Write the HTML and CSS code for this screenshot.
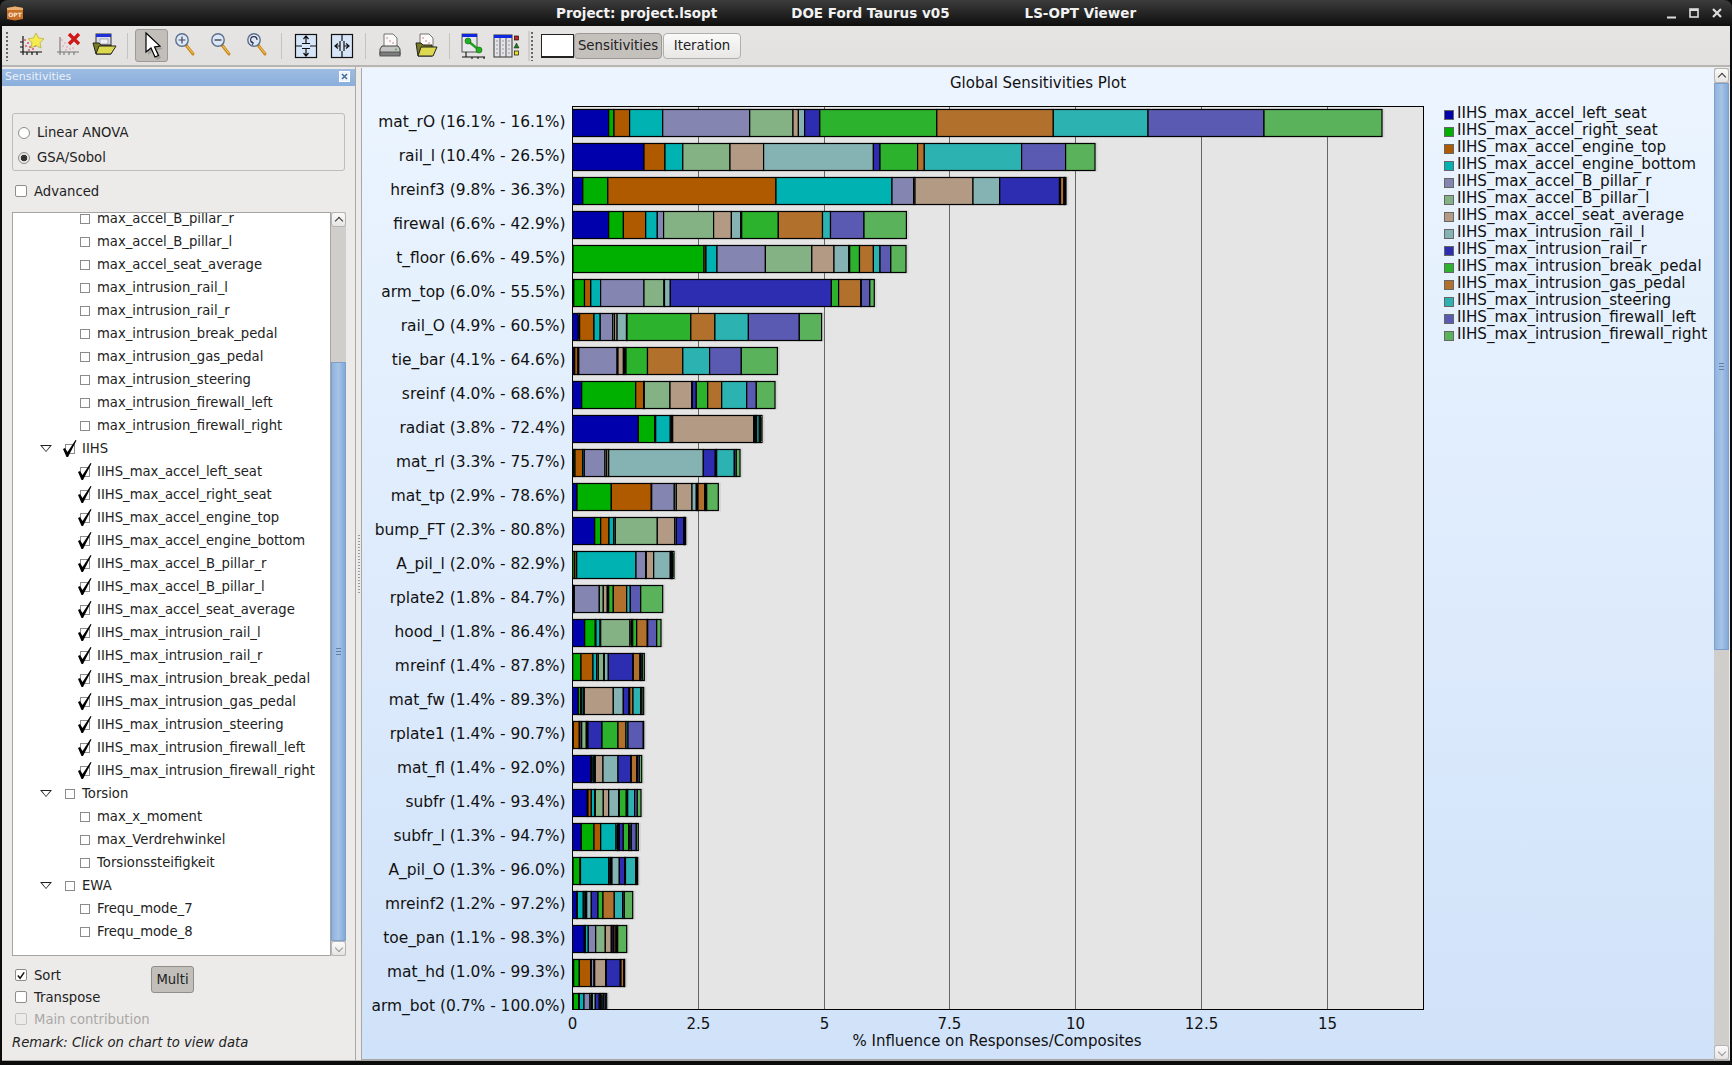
FILE: index.html
```html
<!DOCTYPE html>
<html lang="en">
  <head>
    <meta charset="UTF-8" />
    <title>LS-OPT Viewer</title>
    <link rel="stylesheet" href="styles.css">
  </head>
  <body>
    <svg class="defs" width="0" height="0">
      <symbol id="tick" viewBox="0 0 14 18">
        <path d="M0 9 L2 8 L4.5 12 L12.5 0 L13.5 0.5 L5 17 L3.5 17 Z" fill="#000" />
      </symbol>
      <g id="axes">
        <path d="M8 5 V24 M5 21 H27 M12 21 V24 M17 21 V24 M22 21 V24 M5 16 H8 M5 11 H8" stroke="#111" stroke-width="1.2" fill="none" />
      </g>
      <g id="lens">
        <path d="M15 14 L22 23" stroke="#c98a1e" stroke-width="3" stroke-linecap="round" />
        <path d="M16 15 L22 22.5" stroke="#f5cf6a" stroke-width="1" />
        <circle cx="11" cy="9" r="6.2" fill="#dce8f8" stroke="#5c6f8c" stroke-width="1.4" />
      </g>
    </svg>

    <header class="titlebar">
      <svg class="app-icon" width="16" height="15" viewBox="0 0 16 15">
        <path d="M0 2 L8 0.5 L16 2 V13 L8 14.5 L0 13 Z" fill="#c8702a" />
        <path d="M0 2 L8 0.5 L16 2 V4 H0 Z" fill="#e8b070" />
        <text class="app-icon-text" x="8" y="11" text-anchor="middle">OPT</text>
      </svg>
      <span class="title-part project">Project: project.lsopt</span>
      <span class="title-part doe">DOE Ford Taurus v05</span>
      <span class="title-part viewer">LS-OPT Viewer</span>
      <div class="win-buttons">
        <svg width="12" height="12" viewBox="0 0 12 12"><path d="M2 10.5 H11" stroke="#ddd" stroke-width="2" /></svg>
        <svg width="12" height="12" viewBox="0 0 12 12"><rect x="2" y="2" width="8" height="8" fill="none" stroke="#ddd" stroke-width="1.6" /><path d="M2 3 H10" stroke="#ddd" stroke-width="2" /></svg>
        <svg width="12" height="12" viewBox="0 0 12 12"><path d="M2 2 L10 10 M10 2 L2 10" stroke="#ddd" stroke-width="2.2" /></svg>
      </div>
    </header>

    <nav class="toolbar">
      <div class="handle first"></div>
      <button class="tool">
        <svg width="30" height="30" viewBox="0 0 30 30">
          <use href="#axes" />
          <g fill="#e0506a"><circle cx="10" cy="9" r="1" /><circle cx="13" cy="12" r="1" /><circle cx="11" cy="15" r="1" /><circle cx="15" cy="16" r="1" /><circle cx="18" cy="18" r="1" /><circle cx="14" cy="19" r="1" /><circle cx="20" cy="15" r="1" /></g>
          <path d="M21 2 L23.6 7 L29 7.8 L25 11.6 L26 17 L21 14.4 L16 17 L17 11.6 L13 7.8 L18.4 7 Z" fill="#f4ec50" stroke="#b8b040" stroke-width="0.8" />
        </svg>
      </button>
      <button class="tool">
        <svg width="30" height="30" viewBox="0 0 30 30">
          <path d="M8 6 V24 M5 21 H27 M12 21 V24 M17 21 V24 M22 21 V24" stroke="#777" stroke-width="1.1" fill="none" />
          <g fill="#eab0b8"><circle cx="10" cy="9" r="1" /><circle cx="13" cy="12" r="1" /><circle cx="11" cy="15" r="1" /><circle cx="15" cy="16" r="1" /><circle cx="18" cy="18" r="1" /><circle cx="14" cy="19" r="1" /><circle cx="21" cy="17" r="1" /></g>
          <path d="M17 3 L27 13 M27 3 L17 13" stroke="#d01818" stroke-width="3.4" />
        </svg>
      </button>
      <button class="tool">
        <svg width="30" height="30" viewBox="0 0 30 30">
          <rect x="7" y="3" width="15" height="13" fill="#d8dce8" stroke="#333" stroke-width="1" />
          <rect x="7" y="3" width="15" height="3" fill="#2030d8" />
          <rect x="11" y="8" width="8" height="5" fill="#f0f0f8" stroke="#888" stroke-width="0.6" />
          <path d="M4 12 H10 L12 14 H22 V23 H7 Z" fill="#7a7a20" stroke="#222" stroke-width="1" />
          <path d="M7 23 L10 15 H27 L22 23 Z" fill="#dcd850" stroke="#222" stroke-width="1" />
        </svg>
      </button>
      <div class="sep"></div>
      <button class="tool pointer">
        <svg width="30" height="32" viewBox="0 0 30 32">
          <path d="M11 6 L11 25 L16 21 L20 30 L24 28 L20 20 L26 19 Z" fill="#555" opacity="0.3" />
          <path d="M9 3 L9 22 L14 18 L18 27 L21.5 25.5 L17.5 17 L23 16 Z" fill="#fff" stroke="#000" stroke-width="1.2" />
        </svg>
      </button>
      <button class="tool">
        <svg width="30" height="30" viewBox="0 0 30 30"><use href="#lens" /><path d="M7.5 9 H14.5 M11 5.5 V12.5" stroke="#445" stroke-width="1.2" /></svg>
      </button>
      <button class="tool">
        <svg width="30" height="30" viewBox="0 0 30 30"><use href="#lens" /><path d="M7.5 9 H14.5" stroke="#445" stroke-width="1.4" /></svg>
      </button>
      <button class="tool">
        <svg width="30" height="30" viewBox="0 0 30 30"><use href="#lens" /><path d="M14 9 A3.2 3.2 0 1 0 10.5 12 M10.5 12 L8.5 10.5 M10.5 12 L9 14" stroke="#334" stroke-width="1.1" fill="none" /></svg>
      </button>
      <div class="sep"></div>
      <button class="tool">
        <svg width="30" height="30" viewBox="0 0 30 30">
          <rect x="4.5" y="3.5" width="21" height="23" fill="#d6e6f8" stroke="#111" stroke-width="1.2" />
          <path d="M4.5 15 H11 M19 15 H25.5 M15 5 V12 M12.5 8 L15 5 L17.5 8 M15 18 V25 M12.5 22 L15 25 L17.5 22 M11 12.5 H19 M11 17.5 H19" stroke="#111" stroke-width="1.2" fill="none" />
        </svg>
      </button>
      <button class="tool">
        <svg width="30" height="30" viewBox="0 0 30 30">
          <rect x="4.5" y="3.5" width="21" height="23" fill="#d6e6f8" stroke="#111" stroke-width="1.2" />
          <path d="M15 3.5 V10 M15 20 V26.5 M8 15 H13 M11 12.5 L8 15 L11 17.5 M17 15 H22 M19 12.5 L22 15 L19 17.5 M13 10 V20 M17 10 V20" stroke="#111" stroke-width="1.2" fill="none" />
        </svg>
      </button>
      <div class="sep"></div>
      <button class="tool">
        <svg width="30" height="30" viewBox="0 0 30 30">
          <path d="M9 3 H18 L22 7 V16 H9 Z" fill="#fafafa" stroke="#666" stroke-width="0.9" />
          <g fill="#d87080"><circle cx="12" cy="7" r="0.8" /><circle cx="15" cy="10" r="0.8" /><circle cx="18" cy="12" r="0.8" /></g>
          <path d="M7 15 H23 L25 18 V24 H5 V18 Z" fill="#c4c4c4" stroke="#444" stroke-width="1" />
          <rect x="5" y="21" width="20" height="4" fill="#7d7d7d" stroke="#444" stroke-width="0.8" />
          <circle cx="21" cy="18.5" r="1" fill="#50b050" />
        </svg>
      </button>
      <button class="tool">
        <svg width="30" height="30" viewBox="0 0 30 30">
          <path d="M9 3 H18 L22 7 V17 H9 Z" fill="#fafafa" stroke="#666" stroke-width="0.9" />
          <g fill="#d87080"><circle cx="12" cy="7" r="0.8" /><circle cx="15" cy="10" r="0.8" /><circle cx="18" cy="12" r="0.8" /></g>
          <path d="M5 12 H10 L12 14 H21 V25 H7 Z" fill="#7a7a20" stroke="#222" stroke-width="1" />
          <path d="M7 25 L10 16 H26 L22 25 Z" fill="#dcd850" stroke="#222" stroke-width="1" />
        </svg>
      </button>
      <div class="sep"></div>
      <button class="tool narrow">
        <svg width="30" height="30" viewBox="0 0 30 30">
          <rect x="4" y="3" width="15" height="18" fill="#e8e8ec" stroke="#444" stroke-width="0.9" />
          <rect x="4" y="3" width="15" height="3" fill="#1028e0" />
          <path d="M10 10 L21 19" stroke="#20a020" stroke-width="2.4" />
          <circle cx="10" cy="10" r="3" fill="#20b020" stroke="#156015" stroke-width="0.6" />
          <circle cx="21" cy="19" r="3" fill="#20b020" stroke="#156015" stroke-width="0.6" />
          <path d="M8 21 V26 M4 26 H27 M14 26 V28 M20 26 V28 M26 26 V28" stroke="#111" stroke-width="1.1" fill="none" />
        </svg>
      </button>
      <button class="tool narrow">
        <svg width="30" height="30" viewBox="0 0 30 30">
          <rect x="3" y="4" width="18" height="22" fill="#e4e4e8" stroke="#333" stroke-width="1" />
          <rect x="3" y="4" width="18" height="3" fill="#1028e0" />
          <path d="M9 7 V26 M15 7 V26" stroke="#555" stroke-width="1" />
          <path d="M5 10 H7 M5 14 H7 M5 18 H7 M5 22 H7 M11 10 H13 M11 14 H13 M11 18 H13 M11 22 H13 M17 10 H19 M17 14 H19 M17 18 H19 M17 22 H19" stroke="#999" stroke-width="1" />
          <rect x="23.5" y="5" width="4" height="4" fill="#d02020" stroke="#111" stroke-width="0.7" />
          <path d="M25.5 12 L28 17 H23 Z" fill="#208020" stroke="#111" stroke-width="0.5" />
          <rect x="23.5" y="20" width="4" height="4" fill="#f0e020" stroke="#111" stroke-width="0.7" />
        </svg>
      </button>
      <div class="handle second"></div>
      <div class="color-box"></div>
      <button class="text-btn sens">Sensitivities</button>
      <button class="text-btn iter">Iteration</button>
    </nav>

    <main class="workspace">
      <aside class="side">
        <div class="side-title">
          <span>Sensitivities</span>
          <svg width="11" height="11" viewBox="0 0 11 11">
            <rect x="0.5" y="0.5" width="10" height="10" fill="#eef4fb" stroke="#fff" />
            <path d="M3 3 L8 8 M8 3 L3 8" stroke="#4a6f9c" stroke-width="1.6" />
          </svg>
        </div>

        <div class="method-box">
          <label class="radio-row"><span class="radio"></span>Linear ANOVA</label>
          <label class="radio-row"><span class="radio on"></span>GSA/Sobol</label>
        </div>

        <label class="opt advanced"><span class="opt-box"></span>Advanced</label>

        <div class="tree-wrap">
          <ul class="tree">
            <li class="leaf"><span class="box"></span>max_accel_B_pillar_r</li>
            <li class="leaf"><span class="box"></span>max_accel_B_pillar_l</li>
            <li class="leaf"><span class="box"></span>max_accel_seat_average</li>
            <li class="leaf"><span class="box"></span>max_intrusion_rail_l</li>
            <li class="leaf"><span class="box"></span>max_intrusion_rail_r</li>
            <li class="leaf"><span class="box"></span>max_intrusion_break_pedal</li>
            <li class="leaf"><span class="box"></span>max_intrusion_gas_pedal</li>
            <li class="leaf"><span class="box"></span>max_intrusion_steering</li>
            <li class="leaf"><span class="box"></span>max_intrusion_firewall_left</li>
            <li class="leaf"><span class="box"></span>max_intrusion_firewall_right</li>
            <li class="group"><span class="arrow"></span><span class="box on"><svg class="tick"><use href="#tick" /></svg></span>IIHS</li>
            <li class="leaf"><span class="box on"><svg class="tick"><use href="#tick" /></svg></span>IIHS_max_accel_left_seat</li>
            <li class="leaf"><span class="box on"><svg class="tick"><use href="#tick" /></svg></span>IIHS_max_accel_right_seat</li>
            <li class="leaf"><span class="box on"><svg class="tick"><use href="#tick" /></svg></span>IIHS_max_accel_engine_top</li>
            <li class="leaf"><span class="box on"><svg class="tick"><use href="#tick" /></svg></span>IIHS_max_accel_engine_bottom</li>
            <li class="leaf"><span class="box on"><svg class="tick"><use href="#tick" /></svg></span>IIHS_max_accel_B_pillar_r</li>
            <li class="leaf"><span class="box on"><svg class="tick"><use href="#tick" /></svg></span>IIHS_max_accel_B_pillar_l</li>
            <li class="leaf"><span class="box on"><svg class="tick"><use href="#tick" /></svg></span>IIHS_max_accel_seat_average</li>
            <li class="leaf"><span class="box on"><svg class="tick"><use href="#tick" /></svg></span>IIHS_max_intrusion_rail_l</li>
            <li class="leaf"><span class="box on"><svg class="tick"><use href="#tick" /></svg></span>IIHS_max_intrusion_rail_r</li>
            <li class="leaf"><span class="box on"><svg class="tick"><use href="#tick" /></svg></span>IIHS_max_intrusion_break_pedal</li>
            <li class="leaf"><span class="box on"><svg class="tick"><use href="#tick" /></svg></span>IIHS_max_intrusion_gas_pedal</li>
            <li class="leaf"><span class="box on"><svg class="tick"><use href="#tick" /></svg></span>IIHS_max_intrusion_steering</li>
            <li class="leaf"><span class="box on"><svg class="tick"><use href="#tick" /></svg></span>IIHS_max_intrusion_firewall_left</li>
            <li class="leaf"><span class="box on"><svg class="tick"><use href="#tick" /></svg></span>IIHS_max_intrusion_firewall_right</li>
            <li class="group"><span class="arrow"></span><span class="box"></span>Torsion</li>
            <li class="leaf"><span class="box"></span>max_x_moment</li>
            <li class="leaf"><span class="box"></span>max_Verdrehwinkel</li>
            <li class="leaf"><span class="box"></span>Torsionssteifigkeit</li>
            <li class="group"><span class="arrow"></span><span class="box"></span>EWA</li>
            <li class="leaf"><span class="box"></span>Frequ_mode_7</li>
            <li class="leaf"><span class="box"></span>Frequ_mode_8</li>
          </ul>
          <div class="scroll tree-scroll">
            <div class="scroll-btn up"></div>
            <div class="scroll-gap tree-gap"></div>
            <div class="scroll-thumb"><span class="grip"></span></div>
            <div class="scroll-btn down"></div>
          </div>
        </div>

        <div class="bottom-row">
          <div class="opts">
            <label class="opt"><span class="opt-box"><svg width="11" height="11" viewBox="0 0 11 11"><path d="M2 5.5 L4.5 8.5 L9 2" stroke="#111" stroke-width="1.6" fill="none" /></svg></span>Sort</label>
            <label class="opt"><span class="opt-box"></span>Transpose</label>
            <label class="opt disabled"><span class="opt-box"></span>Main contribution</label>
          </div>
          <button class="multi">Multi</button>
        </div>
        <p class="remark">Remark: Click on chart to view data</p>
      </aside>

      <div class="splitter"><span></span></div>

      <section class="plot">
        <svg id="chart" width="1352" height="992" viewBox="362 68 1352 992"></svg>
      </section>

      <div class="scroll plot-scroll">
        <div class="scroll-btn up"></div>
        <div class="scroll-thumb plot-thumb"><span class="grip"></span></div>
        <div class="scroll-gap"></div>
        <div class="scroll-btn down"></div>
      </div>
    </main>

    <script src="chart.js"></script>
  </body>
</html>
```

FILE: styles.css
```css
:root {
  --panel: #ecebe9;
  --blue: #8fb3de;
  --line: #a8a8a6;
}
* {
  box-sizing: border-box;
}
body {
  margin: 0;
  width: 1732px;
  height: 1065px;
  overflow: hidden;
  background: #0c0c0c;
  font-family: "DejaVu Sans", sans-serif;
  font-size: 13.2px;
  color: #222;
}
.defs {
  position: absolute;
}

/* window title */
.titlebar {
  height: 26px;
  display: flex;
  align-items: center;
  background: linear-gradient(#3c3c3c, #0e0e0e);
  border-radius: 8px 8px 0 0;
  color: #f2f2f2;
  font-weight: bold;
  font-size: 13.5px;
}
.app-icon {
  margin-left: 7px;
}
.app-icon-text {
  font-size: 6px;
  font-weight: bold;
  fill: #fbe8d0;
}
.project {
  margin-left: 533px;
}
.doe {
  margin-left: 74px;
}
.viewer {
  margin-left: 75px;
}
.win-buttons {
  margin-left: auto;
  margin-right: 9px;
  display: flex;
  gap: 11px;
}

/* toolbar */
.toolbar {
  height: 41px;
  margin: 0 2px;
  padding-left: 3px;
  display: flex;
  align-items: center;
  background: linear-gradient(#e6e5e3, #e2e1df);
  border-bottom: 2px solid #b7b6b3;
}
.handle {
  width: 5px;
  height: 30px;
  background: radial-gradient(circle, #666 0.8px, transparent 1px) 0 0 / 4px 4px repeat-y;
}
.tool {
  width: 36px;
  height: 34px;
  padding: 0;
  border: 0;
  background: none;
  display: flex;
  align-items: center;
  justify-content: center;
}
.handle.first + .tool {
  margin-left: 2px;
}
.tool + .tool {
  margin-left: 1px;
}
.sep + .tool + .tool,
.pointer + .tool + .tool,
.pointer + .tool + .tool + .tool {
  margin-left: 0;
}
.pointer {
  width: 33px;
  height: 33px;
  background: #c2bfbb;
  border: 1px solid #9c9a96;
  border-radius: 3px;
  margin-left: 1px;
}
.sep {
  width: 1px;
  height: 26px;
  margin: 0 6px 0 5px;
  background: #c4c3c0;
}
.tool.narrow {
  width: 33px;
}
.tool.narrow + .tool.narrow {
  margin-left: 0;
}
.handle.second {
  margin-left: 8px;
  padding-left: 1px;
  box-shadow: -2px 0 0 #cfcecb;
}
.color-box {
  width: 33px;
  height: 24px;
  margin-left: 6px;
  background: #fff;
  border: 1px solid #222;
  border-bottom-width: 2px;
}
.text-btn {
  height: 26px;
  padding: 0;
  font: 13.3px "DejaVu Sans", sans-serif;
  color: #222;
  border: 1px solid #b0afac;
  border-radius: 4px;
  background: linear-gradient(#fafafa, #e8e7e5);
}
.sens {
  width: 88px;
  background: #c4c1bd;
  border-color: #9c9a96;
  overflow: hidden;
  white-space: nowrap;
}
.iter {
  width: 78px;
  margin-left: 1px;
}

/* main area */
.workspace {
  height: 994px;
  margin: 0 2px;
  display: flex;
  background: var(--panel);
  border-bottom: 1px solid var(--line);
}
.side {
  width: 354px;
  padding-top: 2px;
  border-right: 1px solid var(--line);
}
.side-title {
  height: 17px;
  padding: 0 5px 2px 3px;
  display: flex;
  align-items: center;
  justify-content: space-between;
  background: linear-gradient(#9dbce2, #8aafdc);
  color: #eaf1fa;
  font-size: 11px;
}
.method-box {
  width: 333px;
  height: 58px;
  margin: 27px 0 0 10px;
  padding: 6px 0 0 5px;
  border: 1px solid #bdbcba;
  border-radius: 3px;
}
.radio-row {
  height: 25px;
  display: flex;
  align-items: center;
  gap: 7px;
}
.radio {
  width: 12px;
  height: 12px;
  border: 1px solid #8d8d8d;
  border-radius: 50%;
  background: #fff;
}
.radio.on {
  background: radial-gradient(circle, #333 3px, #e8e8e8 3.6px);
}
.opt {
  height: 22px;
  display: flex;
  align-items: center;
  gap: 7px;
}
.opt-box {
  width: 12px;
  height: 12px;
  border: 1px solid #8d8d8d;
  border-radius: 2px;
  background: #fff;
  display: flex;
}
.opt.disabled {
  color: #a9a8a6;
}
.opt.disabled .opt-box {
  background: none;
  border-color: #c4c3c1;
}
.advanced {
  margin: 9px 0 0 13px;
}

/* parameter tree */
.tree-wrap {
  display: flex;
  height: 744px;
  margin: 10px 0 0 10px;
  width: 334px;
}
.tree {
  width: 319px;
  margin: 0;
  padding: 0;
  list-style: none;
  overflow: hidden;
  background: #fff;
  border: 1px solid #a5a5a3;
}
.tree li {
  height: 23px;
  display: flex;
  align-items: center;
}
.tree li:first-child {
  margin-top: -6px;
}
.leaf {
  padding-left: 67px;
}
.group {
  padding-left: 27px;
}
.arrow {
  width: 0;
  height: 0;
  margin-right: 13px;
  border-left: 6px solid transparent;
  border-right: 6px solid transparent;
  border-top: 7px solid #222;
  position: relative;
}
.arrow::after {
  content: "";
  position: absolute;
  left: -4px;
  top: -6px;
  border-left: 4px solid transparent;
  border-right: 4px solid transparent;
  border-top: 5px solid #fff;
}
.box {
  width: 10px;
  height: 10px;
  margin-right: 7px;
  border: 1px solid #8b8b8b;
  position: relative;
  flex: none;
}
.tick {
  position: absolute;
  left: -3px;
  top: -5px;
  width: 14px;
  height: 18px;
}
.scroll {
  width: 15px;
  display: flex;
  flex-direction: column;
  background: #cfcecb;
}
.scroll-btn {
  height: 15px;
  flex: none;
  background: linear-gradient(#fafafa, #e6e5e3);
  border: 1px solid #b5b4b2;
  border-radius: 3px;
  display: flex;
  align-items: center;
  justify-content: center;
}
.scroll-btn::after {
  content: "";
  width: 5px;
  height: 5px;
  border-left: 1.5px solid #333;
  border-top: 1.5px solid #333;
  transform: translateY(1px) rotate(45deg);
}
.scroll-btn.down::after {
  border-color: #999;
  transform: translateY(-1px) rotate(225deg);
}
.scroll-gap {
  flex: 1;
}
.tree-gap {
  flex: none;
  height: 135px;
}
.scroll-thumb {
  flex: 1;
  background: linear-gradient(90deg, #8fb3de, #a6c3e6 50%, #82a9d8);
  border: 1px solid #7d9fca;
  display: flex;
  align-items: center;
  justify-content: center;
}
.grip {
  width: 5px;
  height: 7px;
  border-top: 1px solid #5d7fa9;
  border-bottom: 1px solid #5d7fa9;
  background: linear-gradient(#5d7fa9, #5d7fa9) 0 50% / 100% 1px no-repeat;
}

/* bottom of the side panel */
.bottom-row {
  display: flex;
  margin: 10px 0 0 13px;
}
.opts {
  width: 136px;
  margin-top: -2px;
}
.multi {
  width: 43px;
  height: 27px;
  padding: 0;
  font: 13.2px "DejaVu Sans", sans-serif;
  color: #222;
  background: #c2bfbb;
  border: 1px solid #8f8e8b;
  border-radius: 3px;
}
.remark {
  margin: 5px 0 0 10px;
  font-style: italic;
}
.splitter {
  width: 5px;
  display: flex;
  align-items: center;
  justify-content: center;
}
.splitter span {
  width: 2px;
  height: 60px;
  background: radial-gradient(circle, #999 0.7px, transparent 1px) 0 0 / 2px 3px;
}

/* plot area */
.plot {
  width: 1353px;
  height: 992px;
  margin-top: 1px;
  background: linear-gradient(#ecf5ff, #d0e2f9);
  border-left: 1px solid var(--line);
  border-bottom: 1px solid var(--line);
  overflow: hidden;
}
#chart {
  display: block;
  font-family: "DejaVu Sans", sans-serif;
  font-size: 15px;
  fill: #111;
}
.row-label {
  font-size: 15.45px;
}
.legend-label {
  font-size: 15.15px;
}
.plot-scroll {
  height: 992px;
  margin-top: 1px;
}
.plot-thumb {
  flex: none;
  height: 567px;
}
```

FILE: chart.js
```js
// cumulative segment ends for each row, in pixels from the axis (50.3px = 1%)
const rows = [
  ["mat_rO (16.1% - 16.1%)", [36.7, 42, 57.6, 90.7, 177.7, 221, 226.4, 232.6, 247.8, 364.8, 481.3, 576, 692, 810]],
  ["rail_l (10.4% - 26.5%)", [72, 72, 93, 110.8, 110.8, 158, 191.6, 301.4, 308, 345.6, 352.3, 449.6, 493.6, 523]],
  ["hreinf3 (9.8% - 36.3%)", [10.8, 35.8, 204, 320, 341.6, 343, 401, 427.7, 487.5, 488.5, 492, 492.3, 493, 494]],
  ["firewal (6.6% - 42.9%)", [36.7, 51.4, 73.7, 85.3, 91.6, 141.6, 159.4, 168.8, 169.7, 206.3, 250.5, 258.5, 292, 334.4]],
  ["t_floor (6.6% - 49.5%)", [1, 132, 134, 145, 193.4, 239.8, 262, 276.8, 277.7, 287.5, 301.4, 308, 318.8, 334]],
  ["arm_top (6.0% - 55.5%)", [1.8, 12.5, 18.8, 28.6, 72, 92, 92.5, 98.3, 259.4, 266.6, 288.9, 289.3, 297.8, 302.3]],
  ["rail_O (4.9% - 60.5%)", [6.3, 7.6, 22, 28.2, 40.7, 42.5, 45.1, 54.5, 55, 118.8, 142.9, 176.4, 227.3, 249.6]],
  ["tie_bar (4.1% - 64.6%)", [2.3, 2.7, 5.9, 6.8, 45.1, 46, 51.4, 52.7, 54, 75.5, 110.8, 137.6, 169.3, 205.4]],
  ["sreinf (4.0% - 68.6%)", [9.7, 63.7, 71.7, 72, 72.3, 98, 119.7, 120.3, 124.3, 135.7, 149.7, 174.7, 184.3, 203]],
  ["radiat (3.8% - 72.4%)", [66.3, 82.7, 83.7, 98.3, 99.7, 100.7, 181.7, 182.3, 183.7, 184.3, 184.7, 187.3, 188.7, 190]],
  ["mat_rl (3.3% - 75.7%)", [1.3, 3, 10.7, 12.3, 33, 34.7, 36.7, 131.3, 143.3, 144.3, 144.7, 162.3, 164.3, 168]],
  ["mat_tp (2.9% - 78.6%)", [5, 39.3, 79.3, 79.7, 102.3, 104.3, 120, 124.3, 125.3, 126, 132.7, 133.7, 134.7, 146.3]],
  ["bump_FT (2.3% - 80.8%)", [22.7, 28.7, 37, 41.7, 43.3, 85.3, 102.7, 104.3, 111.7, 112, 112.3, 112.7, 113.3, 113.7]],
  ["A_pil_l (2.0% - 82.9%)", [0.7, 2.7, 4.7, 64, 73.7, 74.3, 81.7, 98.3, 99, 99.4, 99.8, 100.2, 100.7, 102]],
  ["rplate2 (1.8% - 84.7%)", [0.7, 1.3, 1.8, 2.3, 27.3, 31.3, 35.3, 36, 36.7, 41.3, 54.7, 58.3, 68.7, 90.7]],
  ["hood_l (1.8% - 86.4%)", [12.7, 23.3, 24, 28, 28.7, 58, 59.3, 60, 60.7, 64.7, 75.3, 75.7, 84.7, 89]],
  ["mreinf (1.4% - 87.8%)", [0.7, 9, 21, 24.7, 26.3, 31.7, 32.3, 36.3, 61, 61.3, 68, 69, 70.3, 72.3]],
  ["mat_fw (1.4% - 89.3%)", [6.3, 8.7, 9.3, 11.3, 11.7, 12.3, 41.3, 51.3, 57, 57.7, 61, 68.7, 70, 71.7]],
  ["rplate1 (1.4% - 90.7%)", [0.7, 1.3, 7.3, 8, 9.7, 14.3, 15, 16, 30, 46, 54, 56, 71.3, 71.7]],
  ["mat_fl (1.4% - 92.0%)", [18.7, 19.3, 20, 21.3, 22.7, 23.3, 31, 46, 58.7, 59.3, 64.7, 65.3, 67.3, 69.7]],
  ["subfr (1.4% - 93.4%)", [15.3, 16, 19.3, 22.7, 23.3, 31.3, 36.7, 46.7, 47.3, 54.3, 55.7, 62.7, 65.3, 69]],
  ["subfr_l (1.3% - 94.7%)", [9.3, 22, 28.7, 44, 45.3, 46, 46.7, 47.3, 51.3, 56.7, 58, 59.3, 64.3, 66.3]],
  ["A_pil_O (1.3% - 96.0%)", [1, 8, 8.5, 36.7, 38, 39, 40, 47.3, 52.7, 53, 53.5, 63.7, 64.5, 65.7]],
  ["mreinf2 (1.2% - 97.2%)", [4.7, 5, 5.3, 11.3, 13, 14, 14.7, 19.3, 26, 31, 42.3, 50.7, 52.3, 60.7]],
  ["toe_pan (1.1% - 98.3%)", [12.3, 13, 13.3, 16.3, 23.7, 33.3, 39.3, 40, 41.7, 42, 44, 44.7, 45.7, 54.7]],
  ["mat_hd (1.0% - 99.3%)", [1.7, 7.3, 18.7, 19.3, 22, 22.7, 33.7, 34.3, 48.3, 49, 52, 52.2, 52.4, 52.7]],
  ["arm_bot (0.7% - 100.0%)", [1.3, 6.7, 7.3, 12, 18, 19.3, 20.3, 23.3, 27.3, 28.7, 30, 31.3, 33.3, 34.7]],
];

const series = [
  ["IIHS_max_accel_left_seat", "#0000ac"],
  ["IIHS_max_accel_right_seat", "#00b000"],
  ["IIHS_max_accel_engine_top", "#b05a00"],
  ["IIHS_max_accel_engine_bottom", "#00b2b2"],
  ["IIHS_max_accel_B_pillar_r", "#8585b2"],
  ["IIHS_max_accel_B_pillar_l", "#85b285"],
  ["IIHS_max_accel_seat_average", "#b29a85"],
  ["IIHS_max_intrusion_rail_l", "#85b2b2"],
  ["IIHS_max_intrusion_rail_r", "#2d2db2"],
  ["IIHS_max_intrusion_break_pedal", "#2db22d"],
  ["IIHS_max_intrusion_gas_pedal", "#b2702d"],
  ["IIHS_max_intrusion_steering", "#2db2b2"],
  ["IIHS_max_intrusion_firewall_left", "#5a5ab2"],
  ["IIHS_max_intrusion_firewall_right", "#5ab25a"],
];

const chart = document.getElementById("chart");
const left = 572;
const right = 1423;
const top_ = 106;
const bottom = 1009;

function add(parent, name, attrs, text) {
  const el = document.createElementNS("http://www.w3.org/2000/svg", name);
  for (const key in attrs) el.setAttribute(key, attrs[key]);
  if (text) el.textContent = text;
  parent.appendChild(el);
  return el;
}

add(chart, "rect", { x: left + 0.5, y: top_ + 0.5, width: right - left, height: bottom - top_, fill: "#e5e5e5" });

// grid and x axis labels
[0, 2.5, 5, 7.5, 10, 12.5, 15].forEach((v) => {
  const x = Math.round(left + v * 50.3) + 0.5;
  if (v > 0) add(chart, "line", { x1: x, x2: x, y1: top_, y2: bottom, stroke: "#666", "stroke-width": 1 });
  add(chart, "text", { x: x, y: 1029, "text-anchor": "middle" }, String(v));
});

const clip = add(add(chart, "defs", {}), "clipPath", { id: "frame" });
add(clip, "rect", { x: left, y: top_, width: right - left, height: bottom - top_ });
const bars = add(chart, "g", { "clip-path": "url(#frame)" });

rows.forEach(([label, ends], i) => {
  const y = 109.5 + i * 34;
  add(bars, "rect", { x: left, y: y - 1, width: ends[13] + 2.5, height: 29, fill: "#000", opacity: 0.08 });
  let start = 0;
  ends.forEach((end, s) => {
    add(bars, "rect", {
      x: left + start,
      y: y,
      width: end - start,
      height: 27,
      fill: series[s][1],
      stroke: "#000",
      "stroke-width": 1.2,
    });
    start = end;
  });
  add(chart, "text", { class: "row-label", x: 565.5, y: 127 + i * 34, "text-anchor": "end" }, label);
});

add(chart, "rect", { x: left + 0.5, y: top_ + 0.5, width: right - left, height: bottom - top_, fill: "none", stroke: "#000", "stroke-width": 1 });

add(chart, "text", { x: 1038, y: 88, "text-anchor": "middle" }, "Global Sensitivities Plot");
add(chart, "text", { x: 997, y: 1046, "text-anchor": "middle" }, "% Influence on Responses/Composites");

// legend
series.forEach(([name, color], i) => {
  add(chart, "rect", { x: 1444.5, y: 110.5 + i * 17, width: 9, height: 9, fill: color, stroke: "#666", "stroke-width": 1 });
  add(chart, "text", { class: "legend-label", x: 1457, y: 118 + i * 17 }, name);
});
```
